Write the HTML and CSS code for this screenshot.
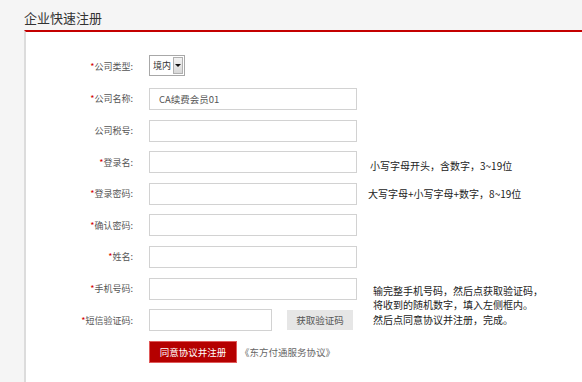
FILE: index.html
```html
<!DOCTYPE html>
<html lang="zh-CN">
<head>
<meta charset="utf-8">
<title>企业快速注册</title>
<link rel="stylesheet" href="styles.css">
</head>
<body>
<div class="page">
  <div class="title">企业快速注册</div>
  <div class="panel">
    <form class="form">
      <label class="lbl"><i class="req">*</i>公司类型:</label>
      <div class="field field-top">
        <span class="select-wrap">
          <select class="select"><option>境内</option><option>境外</option></select>
          <span class="arrow"></span>
        </span>
      </div>
      <span></span>

      <label class="lbl"><i class="req">*</i>公司名称:</label>
      <div class="field"><input class="inp" type="text" value="CA续费会员01"></div>
      <span></span>

      <label class="lbl">公司税号:</label>
      <div class="field"><input class="inp" type="text"></div>
      <span></span>

      <label class="lbl"><i class="req">*</i>登录名:</label>
      <div class="field"><input class="inp" type="text"></div>
      <span class="hint hint-down">小写字母开头，含数字，3~19位</span>

      <label class="lbl"><i class="req">*</i>登录密码:</label>
      <div class="field"><input class="inp" type="password"></div>
      <span class="hint hint-pwd">大写字母+小写字母+数字，8~19位</span>

      <label class="lbl"><i class="req">*</i>确认密码:</label>
      <div class="field"><input class="inp" type="password"></div>
      <span></span>

      <label class="lbl"><i class="req">*</i>姓名:</label>
      <div class="field"><input class="inp" type="text"></div>
      <span></span>

      <label class="lbl"><i class="req">*</i>手机号码:</label>
      <div class="field"><input class="inp" type="text"></div>
      <p class="hint hint-sms">输完整手机号码，然后点获取验证码，<br>将收到的随机数字，填入左侧框内。<br>然后点同意协议并注册，完成。</p>

      <label class="lbl"><i class="req">*</i>短信验证码:</label>
      <div class="field">
        <input class="inp inp-short" type="text">
        <button class="btn-code" type="button">获取验证码</button>
      </div>

      <span></span>
      <div class="field">
        <button class="btn-submit" type="button">同意协议并注册</button>
        <a class="agree" href="#">《东方付通服务协议》</a>
      </div>
    </form>
  </div>
</div>
</body>
</html>
```

FILE: styles.css
```css
html, body {
  margin: 0;
  padding: 0;
  background: #f5f5f5;
  font-family: "Noto Sans CJK SC", "Noto Sans", sans-serif;
  color: #333;
}

.page {
  width: 582px;
  height: 382px;
  overflow: hidden;
}

.title {
  height: 30px;
  box-sizing: border-box;
  padding: 6px 0 0 24px;
  font-size: 13px;
  line-height: 24px;
  color: #333;
}

.panel {
  margin-left: 24px;
  background: #fff;
  border-top: 2px solid #c40000;
  border-left: 2px solid #dcdcdc;
  height: 360px;
  box-sizing: border-box;
  padding-top: 23px;
}

.form {
  display: grid;
  grid-template-columns: 123px 208px 1fr;
  grid-template-rows: 23.4px;
  grid-auto-rows: 22px;
  row-gap: 9.6px;
  align-items: center;
}

.lbl {
  padding-right: 16px;
  text-align: right;
  font-size: 9px;
  color: #555;
  white-space: nowrap;
}

.req {
  font-style: normal;
  color: #d40000;
}

.field {
  height: 100%;
  display: flex;
  align-items: center;
}

.field-top {
  align-items: flex-start;
}

.inp {
  box-sizing: border-box;
  width: 208px;
  height: 22px;
  margin: 0;
  padding: 0 0 0 9px;
  border: 1px solid #d2d2d2;
  background: #fff;
  font-family: inherit;
  font-size: 9.5px;
  color: #555;
  outline: none;
}

.inp-short {
  width: 123px;
}

.select-wrap {
  position: relative;
  display: block;
  width: 36px;
  height: 21px;
}

.select {
  display: block;
  appearance: none;
  -webkit-appearance: none;
  box-sizing: border-box;
  width: 36px;
  height: 21px;
  margin: 0;
  padding: 0 0 0 3px;
  border: 1px solid #a8a8a8;
  border-radius: 0;
  background: #fff;
  font-family: inherit;
  font-size: 9px;
  color: #333;
  outline: none;
}

.arrow {
  position: absolute;
  top: 2px;
  right: 2px;
  width: 10px;
  height: 17px;
  box-sizing: border-box;
  border: 1px solid #b0b0b0;
  background: linear-gradient(#f2f2f2, #d8d8d8);
  pointer-events: none;
}

.arrow::after {
  content: "";
  position: absolute;
  left: 1px;
  top: 6px;
  border-left: 3px solid transparent;
  border-right: 3px solid transparent;
  border-top: 3px solid #111;
}

.hint {
  margin: 0;
  font-size: 10px;
  line-height: 14px;
  color: #222;
  white-space: nowrap;
}

.hint-down {
  margin-left: 13px;
  position: relative;
  top: 4px;
}

.hint-pwd {
  margin-left: 11px;
}

.hint-sms {
  grid-column: 3;
  grid-row: 8 / span 2;
  margin-left: 16px;
  margin-top: 2px;
  line-height: 14.5px;
  align-self: center;
}

.btn-code {
  margin: 0 0 0 15px;
  width: 66px;
  height: 20px;
  padding: 0;
  border: 0;
  background: #e6e6e6;
  font-family: inherit;
  font-size: 9.5px;
  color: #555;
}

.btn-submit {
  margin: 0;
  width: 88px;
  height: 22px;
  padding: 0;
  border: 1px solid #e05a5a;
  background: #b50000;
  font-family: inherit;
  font-size: 9.5px;
  color: #fff;
}

.agree {
  margin-left: 3px;
  font-size: 9.5px;
  color: #666;
  text-decoration: none;
}
```
